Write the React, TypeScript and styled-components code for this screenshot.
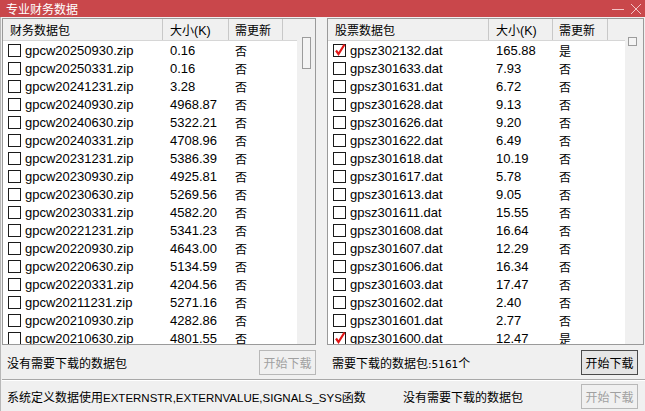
import styled, { createGlobalStyle } from "styled-components";

const GlobalStyle = createGlobalStyle`
    html, body {
        margin: 0;
        padding: 0;
        background: #f0f0f0;
    }
    body {
        font-family: "Liberation Sans", "Noto Sans CJK SC", sans-serif;
        color: #000;
    }
`;

const cjk = `"Noto Sans CJK SC", "Liberation Sans", sans-serif`;

const Window = styled.div`
    width: 645px;
    height: 411px;
    display: flex;
    flex-direction: column;
    background: #f0f0f0;
    overflow: hidden;
`;

const TitleBar = styled.div`
    height: 17px;
    background: #c9474b;
    display: flex;
    align-items: center;
    padding-left: 6px;
    color: #fff;
    font-family: ${cjk};
    font-size: 12px;
`;

const TitleText = styled.span`
    flex: 1;
    line-height: 17px;
`;

const WinButton = styled.span`
    width: 18px;
    height: 17px;
    display: flex;
    align-items: center;
    justify-content: center;
    color: #f3c4c6;
`;

const Content = styled.div`
    flex: 1;
    display: flex;
    flex-direction: column;
    border-left: 1px solid #b8b8b8;
    padding-left: 1px;
`;

const Columns = styled.div`
    display: grid;
    grid-template-columns: 314px 317px;
    column-gap: 11px;
    margin-top: 1px;
`;

const Side = styled.div`
    display: flex;
    flex-direction: column;
`;

const Panel = styled.div`
    height: 325px;
    border: 1px solid #9a9a9a;
    display: flex;
    background: #fff;
`;

const ListArea = styled.div`
    flex: 1;
    display: flex;
    flex-direction: column;
    overflow: hidden;
`;

const HeaderRow = styled.div`
    height: 21px;
    display: flex;
    background: #f0f0f0;
    border-bottom: 1px solid #d6d6d6;
    flex-shrink: 0;
`;

const HeadCell = styled.div<{ $w: number; $pad: number }>`
    width: ${(p) => p.$w}px;
    padding-left: ${(p) => p.$pad}px;
    box-sizing: border-box;
    border-right: 1px solid #c8c8c8;
    font-family: ${cjk};
    font-size: 12px;
    line-height: 21px;
    white-space: nowrap;
`;

const HeadLatin = styled.span`
    font-family: "Liberation Sans", sans-serif;
    font-size: 12.5px;
`;

const HeadFill = styled.div`
    flex: 1;
`;

const Rows = styled.div`
    flex: 1;
    overflow: hidden;
`;

const Row = styled.div`
    height: 18px;
    display: flex;
    align-items: center;
    font-size: 13px;
    white-space: nowrap;
`;

const Cell = styled.div<{ $w: number; $pad: number }>`
    width: ${(p) => p.$w}px;
    padding-left: ${(p) => p.$pad}px;
    box-sizing: border-box;
    display: flex;
    align-items: center;
`;

const Flag = styled.span`
    font-family: ${cjk};
    font-size: 12px;
`;

const Box = styled.span`
    width: 11px;
    height: 11px;
    border: 1px solid #1a1a1a;
    background: #fff;
    margin-right: 4px;
    position: relative;
    flex-shrink: 0;
`;

const Tick = styled.svg`
    position: absolute;
    left: 0;
    top: -2px;
`;

const ScrollTrack = styled.div`
    width: 18px;
    background: #f0f0f0;
    flex-shrink: 0;
`;

const Thumb = styled.div<{ $left: number; $h: number }>`
    margin-top: 18px;
    margin-left: ${(p) => p.$left}px;
    width: 7px;
    height: ${(p) => p.$h}px;
    border: 1px solid #9c9c9c;
    background: #f4f4f4;
`;

const StatusRow = styled.div<{ $padR: number }>`
    height: 34px;
    display: flex;
    align-items: center;
    justify-content: space-between;
    padding-left: 5px;
    padding-right: ${(p) => p.$padR}px;
`;

const StatusText = styled.span`
    font-family: ${cjk};
    font-size: 12px;
`;

const Num = styled.span`
    font-family: "DejaVu Sans", sans-serif;
    font-size: 10.5px;
`;

const Button = styled.button<{ $enabled?: boolean }>`
    width: 57px;
    height: 25px;
    padding: 0;
    font-family: ${cjk};
    font-size: 12px;
    background: ${(p) => (p.$enabled ? "#e5e5e5" : "#f0f0f0")};
    color: ${(p) => (p.$enabled ? "#000" : "#a0a0a0")};
    border: 1px solid ${(p) => (p.$enabled ? "#4a4a4a" : "#b8b8b8")};
    border-radius: 0;
`;

const Divider = styled.div`
    height: 1px;
    background: #a8a8a8;
    border-bottom: 1px solid #fff;
`;

const FooterRow = styled.div`
    flex: 1;
    display: flex;
    align-items: center;
    padding-left: 5px;
    padding-right: 7px;
`;

const FooterText = styled.span<{ $w?: number }>`
    font-family: ${cjk};
    font-size: 12px;
    width: ${(p) => (p.$w ? `${p.$w}px` : "auto")};
    flex: ${(p) => (p.$w ? "none" : "1")};
    white-space: nowrap;
`;

const FooterLatin = styled.span`
    font-family: "Liberation Sans", sans-serif;
    font-size: 11.5px;
`;

type Item = { name: string; size: string; update: string; checked?: boolean };

const finance: Item[] = [
    { name: "gpcw20250930.zip", size: "0.16", update: "否" },
    { name: "gpcw20250331.zip", size: "0.16", update: "否" },
    { name: "gpcw20241231.zip", size: "3.28", update: "否" },
    { name: "gpcw20240930.zip", size: "4968.87", update: "否" },
    { name: "gpcw20240630.zip", size: "5322.21", update: "否" },
    { name: "gpcw20240331.zip", size: "4708.96", update: "否" },
    { name: "gpcw20231231.zip", size: "5386.39", update: "否" },
    { name: "gpcw20230930.zip", size: "4925.81", update: "否" },
    { name: "gpcw20230630.zip", size: "5269.56", update: "否" },
    { name: "gpcw20230331.zip", size: "4582.20", update: "否" },
    { name: "gpcw20221231.zip", size: "5341.23", update: "否" },
    { name: "gpcw20220930.zip", size: "4643.00", update: "否" },
    { name: "gpcw20220630.zip", size: "5134.59", update: "否" },
    { name: "gpcw20220331.zip", size: "4204.56", update: "否" },
    { name: "gpcw20211231.zip", size: "5271.16", update: "否" },
    { name: "gpcw20210930.zip", size: "4282.86", update: "否" },
    { name: "gpcw20210630.zip", size: "4801.55", update: "否" },
];

const stocks: Item[] = [
    { name: "gpsz302132.dat", size: "165.88", update: "是", checked: true },
    { name: "gpsz301633.dat", size: "7.93", update: "否" },
    { name: "gpsz301631.dat", size: "6.72", update: "否" },
    { name: "gpsz301628.dat", size: "9.13", update: "否" },
    { name: "gpsz301626.dat", size: "9.20", update: "否" },
    { name: "gpsz301622.dat", size: "6.49", update: "否" },
    { name: "gpsz301618.dat", size: "10.19", update: "否" },
    { name: "gpsz301617.dat", size: "5.78", update: "否" },
    { name: "gpsz301613.dat", size: "9.05", update: "否" },
    { name: "gpsz301611.dat", size: "15.55", update: "否" },
    { name: "gpsz301608.dat", size: "16.64", update: "否" },
    { name: "gpsz301607.dat", size: "12.29", update: "否" },
    { name: "gpsz301606.dat", size: "16.34", update: "否" },
    { name: "gpsz301603.dat", size: "17.47", update: "否" },
    { name: "gpsz301602.dat", size: "2.40", update: "否" },
    { name: "gpsz301601.dat", size: "2.77", update: "否" },
    { name: "gpsz301600.dat", size: "12.47", update: "是", checked: true },
];

function CheckBox({ checked }: { checked?: boolean }) {
    return (
        <Box>
            {checked && (
                <Tick width="12" height="13" viewBox="0 0 12 13">
                    <path d="M2 7.5 L4.5 11 L10.5 1.5" fill="none" stroke="#e01616" strokeWidth="2.2" />
                </Tick>
            )}
        </Box>
    );
}

type ListProps = {
    title: string;
    items: Item[];
    cols: [number, number, number];
    pad: number;
    thumbLeft: number;
    thumbH: number;
};

function DataList({ title, items, cols, pad, thumbLeft, thumbH }: ListProps) {
    return (
        <Panel>
            <ListArea>
                <HeaderRow>
                    <HeadCell $w={cols[0]} $pad={pad + 2}>{title}</HeadCell>
                    <HeadCell $w={cols[1]} $pad={7}>
                        大小<HeadLatin>(K)</HeadLatin>
                    </HeadCell>
                    <HeadCell $w={cols[2]} $pad={6}>需更新</HeadCell>
                    <HeadFill />
                </HeaderRow>
                <Rows>
                    {items.map((it) => (
                        <Row key={it.name}>
                            <Cell $w={cols[0]} $pad={pad}>
                                <CheckBox checked={it.checked} />
                                {it.name}
                            </Cell>
                            <Cell $w={cols[1]} $pad={7}>{it.size}</Cell>
                            <Cell $w={cols[2]} $pad={6}>
                                <Flag>{it.update}</Flag>
                            </Cell>
                        </Row>
                    ))}
                </Rows>
            </ListArea>
            <ScrollTrack>
                <Thumb $left={thumbLeft} $h={thumbH} />
            </ScrollTrack>
        </Panel>
    );
}

export default function App() {
    return (
        <>
            <GlobalStyle />
            <Window>
                <TitleBar>
                    <TitleText>专业财务数据</TitleText>
                    <WinButton>
                        <svg width="12" height="12" viewBox="0 0 12 12">
                            <path d="M0 6.5 H12" stroke="currentColor" strokeWidth="1" />
                        </svg>
                    </WinButton>
                    <WinButton>
                        <svg width="12" height="12" viewBox="0 0 12 12">
                            <path d="M1 1 L11 11 M11 1 L1 11" stroke="currentColor" strokeWidth="1" />
                        </svg>
                    </WinButton>
                </TitleBar>
                <Content>
                    <Columns>
                        <Side>
                            <DataList
                                title="财务数据包"
                                items={finance}
                                cols={[160, 66, 54]}
                                pad={5}
                                thumbLeft={5}
                                thumbH={30}
                            />
                            <StatusRow $padR={0}>
                                <StatusText>没有需要下载的数据包</StatusText>
                                <Button disabled>开始下载</Button>
                            </StatusRow>
                        </Side>
                        <Side>
                            <DataList
                                title="股票数据包"
                                items={stocks}
                                cols={[161, 64, 55]}
                                pad={5}
                                thumbLeft={3}
                                thumbH={7}
                            />
                            <StatusRow $padR={6}>
                                <StatusText>
                                    需要下载的数据包<Num>:5161</Num>个
                                </StatusText>
                                <Button $enabled>开始下载</Button>
                            </StatusRow>
                        </Side>
                    </Columns>
                    <Divider />
                    <FooterRow>
                        <FooterText $w={396}>
                            系统定义数据使用<FooterLatin>EXTERNSTR,EXTERNVALUE,SIGNALS_SYS</FooterLatin>函数
                        </FooterText>
                        <FooterText>没有需要下载的数据包</FooterText>
                        <Button disabled>开始下载</Button>
                    </FooterRow>
                </Content>
            </Window>
        </>
    );
}
